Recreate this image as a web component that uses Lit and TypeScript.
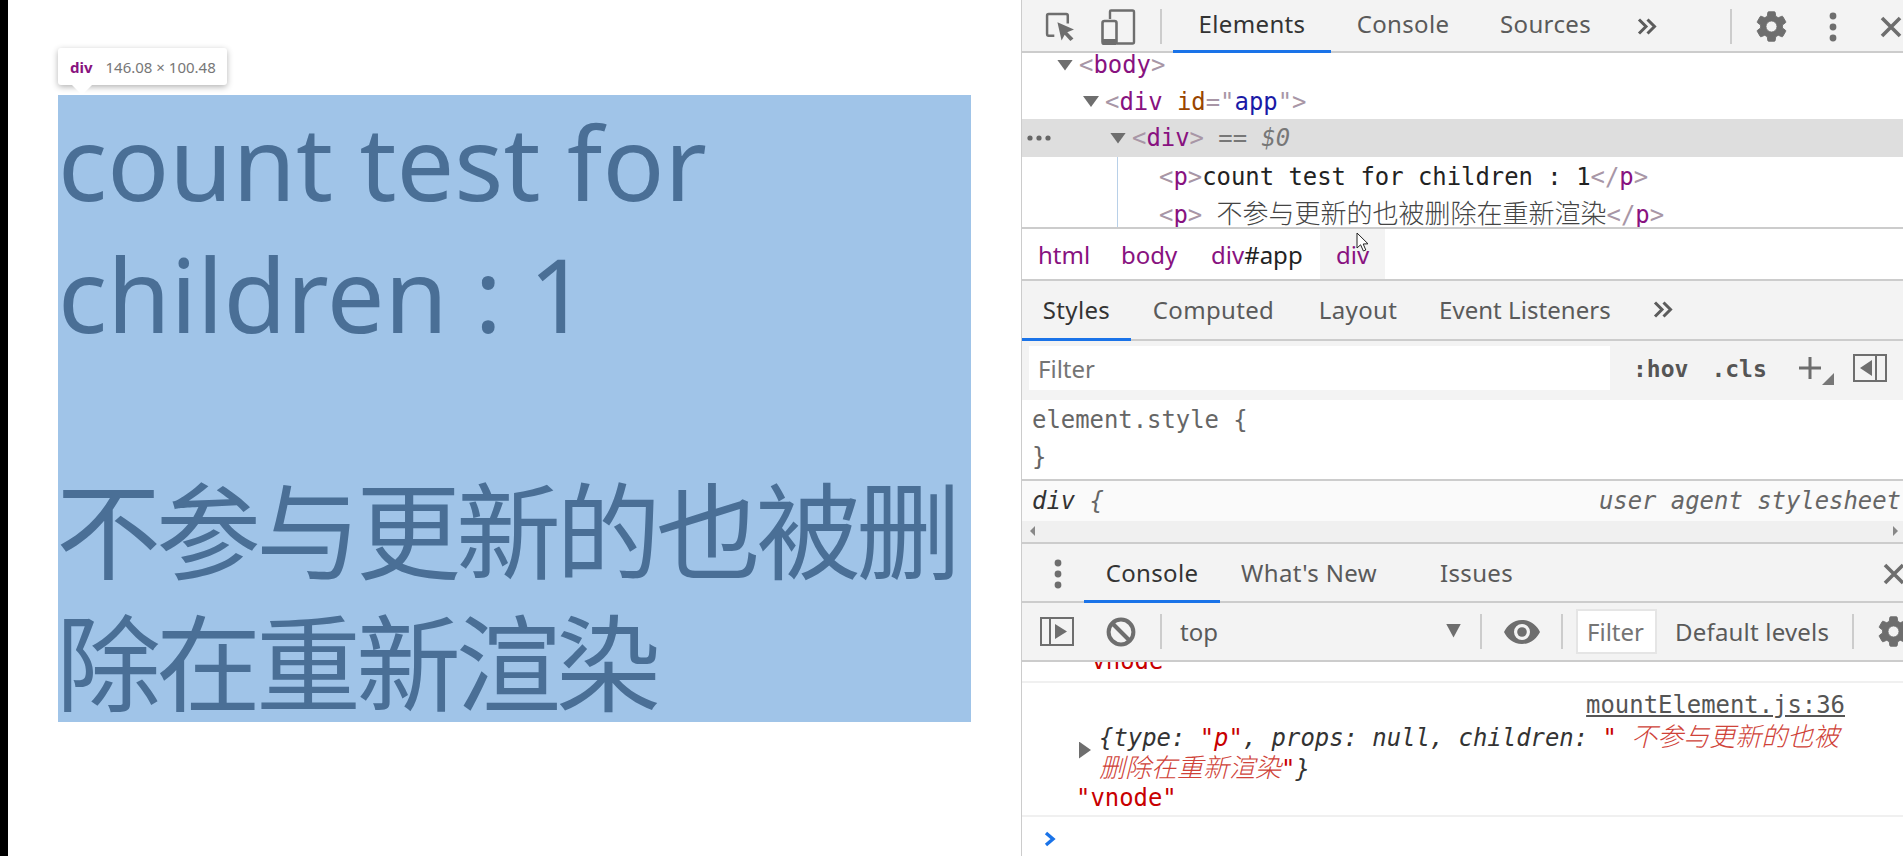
import { LitElement, html, css } from "lit";
import { customElement } from "lit/decorators.js";

const GEAR = "M19.14 12.94c.04-.3.06-.61.06-.94 0-.32-.02-.64-.07-.94l2.03-1.58a.49.49 0 0 0 .12-.61l-1.92-3.32a.488.488 0 0 0-.59-.22l-2.39.96c-.5-.38-1.03-.7-1.62-.94l-.36-2.54a.484.484 0 0 0-.48-.41h-3.84c-.24 0-.43.17-.47.41l-.36 2.54c-.59.24-1.13.57-1.62.94l-2.39-.96c-.22-.08-.47 0-.59.22L2.74 8.87c-.12.21-.08.47.12.61l2.03 1.58c-.05.3-.09.63-.09.94s.02.64.07.94l-2.03 1.58a.49.49 0 0 0-.12.61l1.92 3.32c.12.22.37.29.59.22l2.39-.96c.5.38 1.03.7 1.62.94l.36 2.54c.05.24.24.41.48.41h3.84c.24 0 .44-.17.47-.41l.36-2.54c.59-.24 1.13-.56 1.62-.94l2.39.96c.22.08.47 0 .59-.22l1.92-3.32c.12-.22.07-.47-.12-.61l-2.01-1.58zM12 15.6c-1.98 0-3.6-1.62-3.6-3.6s1.62-3.6 3.6-3.6 3.6 1.62 3.6 3.6-1.62 3.6-3.6 3.6z";

const gear = (cls: string) => html`<svg class=${cls} viewBox="2.4 1.9 19.2 20.2"><path d=${GEAR} fill="#6e6e6e" stroke="#6e6e6e" stroke-width=".6"/></svg>`;
const kebab = () => html`<svg class="kebab" viewBox="0 0 8 30"><circle cx="4" cy="4" r="3.4"/><circle cx="4" cy="15" r="3.4"/><circle cx="4" cy="26" r="3.4"/></svg>`;
const chevrons = () => html`<svg class="chev" viewBox="0 0 20 17"><path d="M2 1.5 L9 8.5 L2 15.5 M10.5 1.5 L17.5 8.5 L10.5 15.5" fill="none" stroke="#5c5c5c" stroke-width="3"/></svg>`;
const closeX = () => html`<svg class="close" viewBox="0 0 22 22"><path d="M2 2 L20 20 M20 2 L2 20" stroke="#6e6e6e" stroke-width="3.6" fill="none"/></svg>`;
const tri = () => html`<i class="tri"></i>`;

@customElement("app-root")
export class AppRoot extends LitElement {
  static styles = css`
    :host { display: flex; width: 1903px; height: 856px; overflow: hidden; background: #fff; font-family: "Noto Sans", sans-serif; position: relative; }
    * { box-sizing: border-box; }
    .edge { width: 8px; background: #000; flex: none; }
    .page { width: 1013px; flex: none; padding: 95px 0 0 50px; position: relative; }
    .hl { width: 913px; height: 627px; background: #a0c4e8; color: #4a6f96; font-size: 102.5px; line-height: 132px; font-family: "Noto Sans", "Noto Sans CJK SC", sans-serif; }
    .hl p { margin: 0; }
    .hl p + p { margin-top: 100px; }
    .hl .zh { font-size: 105px; letter-spacing: -5px; margin-left: -2px; font-family: "Noto Sans CJK SC", sans-serif; }
    .tip { position: absolute; left: 50px; top: 48px; width: 169px; height: 37px; background: #fff; border-radius: 3px; box-shadow: 0 2px 6px rgba(0,0,0,.3); display: flex; align-items: center; padding-left: 12px; font-size: 15px; color: #777; gap: 13px; }
    .tip b { color: #881280; font-weight: 700; }
    .tip::after { content: ""; position: absolute; left: 14px; top: 37px; border: 10px solid transparent; border-top-color: #fff; border-bottom: 0; }

    .dt { flex: none; width: 882px; border-left: 1px solid #ccc; display: flex; flex-direction: column; font-size: 24px; color: #5a5a5a; }
    .mono { font-family: "DejaVu Sans Mono", "Noto Sans CJK SC", monospace; font-size: 23.9px; }
    .z { font-size: 26px; font-family: "Noto Sans CJK SC", sans-serif; font-weight: 300; }
    .bar { background: #f3f3f3; box-shadow: inset 0 -2px #ccc; display: grid; align-items: center; flex: none; }
    .tb { height: 53px; grid-template-columns: 151px 158px 144px 141px 62px 1fr; }
    .tab { align-self: stretch; display: flex; align-items: center; justify-content: center; padding-bottom: 3px; letter-spacing: .35px; }
    .tb .tab { padding-bottom: 7px; }
    .tab.on { color: #333; border-bottom: 3px solid #1a73e8; padding-bottom: 0; }
    .tb .tab.on { padding-bottom: 4px; }
    .icons { display: flex; align-items: center; }
    .ico { display: block; flex: none; }
    .sep { width: 2px; height: 35px; background: #ccc; flex: none; }
    .ins { width: 29px; height: 29px; margin-left: 23px; }
    .dev { width: 35px; height: 36px; margin-left: 27px; }
    .icons .sep { margin-left: 24px; }
    .tr { display: flex; align-items: center; margin-left: 52px; }
    .gear1 { width: 31px; height: 31px; margin-left: 24px; display: block; flex: none; }
    .kebab { width: 8px; height: 30px; display: block; fill: #6e6e6e; flex: none; }
    .tb .kebab { margin-left: 42px; }
    .chev { width: 20px; height: 17px; display: block; justify-self: center; margin-left: -1px; }
    .close { width: 22px; height: 22px; display: block; flex: none; margin-left: 43px; }

    .tree { height: 176px; flex: none; border-bottom: 2px solid #ccc; overflow: hidden; color: #222; display: grid; grid-template-rows: 31px 35px 38px 39px 37px; align-items: center; }
    .tree > div { display: flex; align-items: center; height: 100%; }
    .tree span { white-space: pre; }
    .sel { background: #dedede; }
    .r1 { padding-left: 35px; padding-bottom: 7px; }
    .r2 { padding-left: 61px; }
    .r3 { padding-left: 5px; }
    .dots { width: 24px; height: 6px; margin-right: 59px; fill: #666; display: block; flex: none; }
    i.tri { display: block; flex: none; width: 16px; height: 11px; background: #6e6e6e; clip-path: polygon(0 0, 100% 0, 50% 100%); margin-right: 6px; }
    .tree .kids { grid-row: span 2; display: grid; grid-template-rows: 39px 37px; margin-left: 95px; border-left: 1px solid #b8d0e8; padding-left: 41px; height: 76px; }
    .kids > div { display: flex; align-items: center; }
    .kids > .zr { padding-bottom: 6px; }
    .zr .z { color: #444; }
    .t { color: #881280; }
    .b { color: #a896a6; }
    .an { color: #994500; }
    .av { color: #1a1aa6; }
    .eq { color: #777; font-style: italic; }

    .crumbs { height: 52px; flex: none; border-bottom: 2px solid #ccc; display: grid; grid-template-columns: 83px 90px 125px 65px; color: #222; align-items: stretch; position: relative; }
    .crumbs > span { display: flex; align-items: center; padding-left: 16px; }
    .crumbs .g { color: #881280; }
    .crumbs .cs { background: #f3f3f3; }
    .cursor { position: absolute; left: 334px; top: 3px; width: 13px; height: 20px; display: block; }

    .st { height: 60px; grid-template-columns: 109px 165px 124px 1fr; }
    .st .ev { justify-content: flex-start; padding-left: 19px; gap: 43px; letter-spacing: .05px; }
    .filt { height: 59px; flex: none; background: #f3f3f3; display: flex; align-items: center; }
    .inp { width: 581px; height: 44px; margin-left: 7px; margin-top: -6px; background: #fff; display: flex; align-items: center; padding: 2px 0 0 9px; color: #757575; flex: none; }
    .mono.fm { font-weight: 700; color: #555; font-size: 23px; margin-top: -4px; }
    .fm.h { margin-left: 23px; }
    .fm.c { margin-left: 23px; }
    .plus { width: 24px; height: 24px; margin-left: 31px; margin-top: -6px; display: block; flex: none; }
    .corner { width: 12px; height: 12px; margin-top: 16px; display: block; flex: none; }
    .side { width: 34px; height: 28px; display: block; flex: none; margin-left: 19px; margin-top: -6px; }

    .est { height: 81px; flex: none; border-bottom: 2px solid #ccc; padding: 2px 0 0 10px; color: #666; line-height: 37px; }
    .ua { height: 40px; flex: none; background: #fafafa; display: flex; align-items: center; justify-content: space-between; padding-left: 10px; font-style: italic; color: #666; overflow: hidden; white-space: pre; }
    .ua .s { color: #333; }
    .ua .u { margin-right: 2px; }
    .hs { height: 23px; flex: none; background: #f0f0f0; border-bottom: 2px solid #ccc; display: flex; align-items: center; justify-content: space-between; padding: 0 5px 2px 8px; }
    .hs svg { width: 5px; height: 10px; display: block; }

    .ct { height: 59px; grid-template-columns: 62px 136px 178px 157px 1fr; }
    .ct .kebab { margin-left: 32px; }
    .ct .close { margin-left: 0; justify-self: end; margin-right: -2px; }
    .cb { height: 59px; flex: none; background: #f3f3f3; box-shadow: inset 0 -2px #ccc; display: flex; align-items: center; padding-bottom: 2px; }
    .cb .sidebar { width: 34px; height: 29px; margin-left: 18px; display: block; flex: none; }
    .noent { width: 30px; height: 30px; margin-left: 32px; display: block; flex: none; }
    .cb .s1 { margin-left: 24px; }
    .top { width: 266px; margin-left: 18px; flex: none; }
    .dd { width: 15px; height: 14px; background: #6e6e6e; clip-path: polygon(0 0, 100% 0, 50% 100%); flex: none; margin-top: -2px; }
    .cb .s2 { margin-left: 19px; }
    .eye { width: 36px; height: 24px; margin-left: 22px; display: block; flex: none; }
    .cb .s3 { margin-left: 21px; }
    .cinp { width: 81px; height: 45px; border: 2px solid #e5e5e5; background: #fff; margin-left: 13px; display: flex; align-items: center; padding-left: 9px; color: #757575; flex: none; }
    .lv { margin-left: 18px; width: 177px; flex: none; letter-spacing: .2px; }
    .gear2 { width: 31px; height: 31px; margin-left: 24px; display: block; flex: none; }

    .log { flex: 1; min-height: 0; color: #333; overflow: hidden; }
    .clip { height: 21px; border-bottom: 2px solid #f0f0f0; overflow: hidden; color: #c80000; padding-left: 55px; line-height: 34px; }
    .clip span { display: block; margin-top: -18px; }
    .msg { height: 134px; border-bottom: 2px solid #f0f0f0; padding-top: 7px; }
    .src { height: 30px; line-height: 30px; text-align: right; padding-right: 58px; color: #555; text-decoration: underline; }
    .obj { display: flex; align-items: center; padding-left: 57px; font-style: italic; color: #333; margin-top: -1px; }
    .obj i.play { display: block; flex: none; width: 12px; height: 17px; background: #6e6e6e; clip-path: polygon(0 0, 100% 50%, 0 100%); margin-right: 8px; font-style: normal; }
    .lines div { height: 31px; line-height: 31px; white-space: pre; }
    .red { color: #c80000; }
    .red .z { color: #cf4238; }
    .vn { color: #c80000; padding-left: 54px; height: 30px; line-height: 30px; margin-top: 2px; }
    .prompt { width: 12px; height: 16px; display: block; margin: 14px 0 0 22px; }
  `;

  render() {
    const bT = (n: string) => html`<span class="b">&lt;</span><span class="t">${n}</span><span class="b">&gt;</span>`;
    const eT = (n: string) => html`<span class="b">&lt;/</span><span class="t">${n}</span><span class="b">&gt;</span>`;
    return html`
      <div class="edge"></div>
      <div class="page">
        <div class="tip"><b>div</b><span>146.08 × 100.48</span></div>
        <div class="hl">
          <p>count test for children : 1</p>
          <p class="zh">不参与更新的也被删除在重新渲染</p>
        </div>
      </div>
      <div class="dt">
        <div class="bar tb">
          <div class="icons">
            <svg class="ico ins" viewBox="0 0 28 28"><path d="M12 2 H3.5 Q2 2 2 3.5 V21 Q2 23 3.5 23 H9 M22 11 V3.5 Q22 2 20.5 2 H12" fill="none" stroke="#6e6e6e" stroke-width="2.4"/><path d="M12 10 L28 17 L21.5 19.5 L27.5 25.5 L24.5 28 L19 22 L16 27.5 Z" fill="#6e6e6e"/></svg>
            <svg class="ico dev" viewBox="0 0 35 36"><path d="M9 10 V2.5 Q9 1.5 10 1.5 H31.5 Q33 1.5 33 3 V33 Q33 34.5 31.5 34.5 H16" fill="none" stroke="#6e6e6e" stroke-width="2.4"/><rect x="1.5" y="12" width="14" height="23" rx="2" fill="none" stroke="#6e6e6e" stroke-width="2.6"/><rect x="1.5" y="30" width="14" height="5" fill="#6e6e6e"/></svg>
            <div class="sep"></div>
          </div>
          <div class="tab on">Elements</div>
          <div class="tab">Console</div>
          <div class="tab">Sources</div>
          ${chevrons()}
          <div class="tr"><div class="sep"></div>${gear("gear1")}${kebab()}${closeX()}</div>
        </div>

        <div class="tree mono">
          <div class="r1">${tri()}${bT("body")}</div>
          <div class="r2">${tri()}<span><span class="b">&lt;</span><span class="t">div</span> <span class="an">id</span><span class="b">=</span><span class="b">"</span><span class="av">app</span><span class="b">"&gt;</span></span></div>
          <div class="r3 sel"><svg class="dots" viewBox="0 0 24 6"><circle cx="3" cy="3" r="2.6"/><circle cx="12" cy="3" r="2.6"/><circle cx="21" cy="3" r="2.6"/></svg>${tri()}${bT("div")}<span class="eq"> == $0</span></div>
          <div class="kids">
            <div><span>${bT("p")}count test for children : 1${eT("p")}</span></div>
            <div class="zr"><span>${bT("p")} <span class="z">不参与更新的也被删除在重新渲染</span>${eT("p")}</span></div>
          </div>
        </div>

        <div class="crumbs">
          <span class="g">html</span>
          <span class="g">body</span>
          <span><span class="g">div</span>#app</span>
          <span class="cs g">div</span>
          <svg class="cursor" viewBox="0 0 13 20"><path d="M1 1 V16 L4.6 12.8 L7.4 19 L9.8 18 L7.2 12 L12 11.8 Z" fill="#fff" stroke="#222" stroke-width="1"/></svg>
        </div>

        <div class="bar st">
          <div class="tab on">Styles</div>
          <div class="tab">Computed</div>
          <div class="tab">Layout</div>
          <div class="tab ev"><span>Event Listeners</span>${chevrons()}</div>
        </div>

        <div class="filt">
          <div class="inp">Filter</div>
          <span class="mono fm h">:hov</span>
          <span class="mono fm c">.cls</span>
          <svg class="plus" viewBox="0 0 24 24"><path d="M12 1 V23 M1 12 H23" stroke="#6e6e6e" stroke-width="3"/></svg>
          <svg class="corner" viewBox="0 0 12 12"><path d="M12 0 V12 H0 Z" fill="#777"/></svg>
          <svg class="side" viewBox="0 0 34 28"><rect x="1" y="1" width="32" height="26" fill="none" stroke="#6e6e6e" stroke-width="2"/><path d="M23 1 V27" stroke="#6e6e6e" stroke-width="2"/><path d="M19 6 V22 L7 14 Z" fill="#6e6e6e"/></svg>
        </div>

        <div class="est mono">element.style {<br>}</div>
        <div class="ua mono"><span><span class="s">div</span> {</span><span class="u">user agent stylesheet</span></div>
        <div class="hs">
          <svg viewBox="0 0 5 10"><path d="M5 0 V10 L0 5 Z" fill="#888"/></svg>
          <svg viewBox="0 0 5 10"><path d="M0 0 V10 L5 5 Z" fill="#888"/></svg>
        </div>

        <div class="bar ct">
          ${kebab()}
          <div class="tab on">Console</div>
          <div class="tab">What's New</div>
          <div class="tab">Issues</div>
          ${closeX()}
        </div>

        <div class="cb">
          <svg class="sidebar" viewBox="0 0 34 29"><rect x="1" y="1" width="32" height="27" fill="none" stroke="#6e6e6e" stroke-width="2"/><path d="M10 1 V28" stroke="#6e6e6e" stroke-width="2"/><path d="M15 7 V22 L27 14.5 Z" fill="#6e6e6e"/></svg>
          <svg class="noent" viewBox="0 0 30 30"><circle cx="15" cy="15" r="12.4" fill="none" stroke="#6e6e6e" stroke-width="4"/><path d="M6 6 L24 24" stroke="#6e6e6e" stroke-width="4"/></svg>
          <div class="sep s1"></div>
          <span class="top">top</span>
          <div class="dd"></div>
          <div class="sep s2"></div>
          <svg class="eye" viewBox="0 0 36 24"><path d="M18 0 C9 0 3 6 0 12 C3 18 9 24 18 24 C27 24 33 18 36 12 C33 6 27 0 18 0 Z M18 20 A8 8 0 1 1 18 4 A8 8 0 0 1 18 20 Z" fill="#6e6e6e"/><circle cx="18" cy="12" r="4.8" fill="#6e6e6e"/></svg>
          <div class="sep s3"></div>
          <div class="cinp">Filter</div>
          <span class="lv">Default levels</span>
          <div class="sep"></div>
          ${gear("gear2")}
        </div>

        <div class="log">
          <div class="clip mono"><span>"vnode"</span></div>
          <div class="msg">
            <div class="src mono">mountElement.js:36</div>
            <div class="obj mono">
              <i class="play"></i>
              <div class="lines">
                <div>{type: <span class="red">"p"</span>, props: null, children: <span class="red">" <span class="z">不参与更新的也被</span></span></div>
                <div><span class="red"><span class="z">删除在重新渲染</span>"</span>}</div>
              </div>
            </div>
            <div class="vn mono">"vnode"</div>
          </div>
          <svg class="prompt" viewBox="0 0 12 16"><path d="M2 2 L9 8 L2 14" fill="none" stroke="#1a73e8" stroke-width="3.4"/></svg>
        </div>
      </div>
    `;
  }
}
